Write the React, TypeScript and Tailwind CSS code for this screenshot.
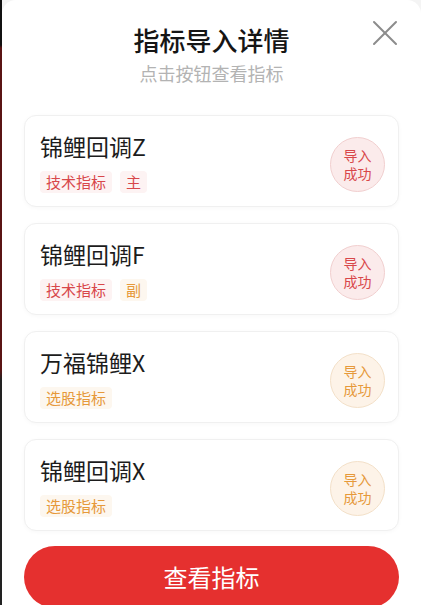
import { X } from 'lucide-react'

type Tag = { label: string; tone: 'red' | 'orange' }

interface Item {
  name: string
  tags: Tag[]
  tone: 'red' | 'orange'
}

const items: Item[] = [
  { name: '锦鲤回调Z', tags: [{ label: '技术指标', tone: 'red' }, { label: '主', tone: 'red' }], tone: 'red' },
  { name: '锦鲤回调F', tags: [{ label: '技术指标', tone: 'red' }, { label: '副', tone: 'orange' }], tone: 'red' },
  { name: '万福锦鲤X', tags: [{ label: '选股指标', tone: 'orange' }], tone: 'orange' },
  { name: '锦鲤回调X', tags: [{ label: '选股指标', tone: 'orange' }], tone: 'orange' },
]

const font = { fontFamily: '"Noto Sans CJK SC", "Noto Sans", sans-serif' }

function Chip({ label, tone }: Tag) {
  return (
    <span
      className={
        tone === 'red'
          ? 'h-[22px] px-[6px] flex items-center rounded-[4px] bg-[#fdf3f3] text-[#d8474a] text-[15px]'
          : 'h-[22px] px-[6px] flex items-center rounded-[4px] bg-[#fdf7ef] text-[#e6993a] text-[15px]'
      }
    >
      {label}
    </span>
  )
}

function ItemCard({ name, tags, tone }: Item) {
  return (
    <div className="h-[92px] rounded-[12px] border border-[#f0f0f0] bg-white shadow-[0_1px_4px_rgba(0,0,0,0.03)] flex items-center pl-[15px] pr-[13px]">
      <div className="flex-1 h-full flex flex-col pt-[16px]">
        <div className="text-[23px] leading-[28px] text-[#1c1c1c]">{name}</div>
        <div className="flex gap-[8px] mt-[11px]">
          {tags.map((t, i) => (
            <Chip key={i} {...t} />
          ))}
        </div>
      </div>
      <div
        className={
          tone === 'red'
            ? 'mt-[6px] w-[55px] h-[55px] rounded-full border border-[#f1cfcf] bg-[#fbebeb] text-[#d8474a] flex items-center justify-center text-center text-[14px] leading-[18px]'
            : 'mt-[6px] w-[55px] h-[55px] rounded-full border border-[#f3e0c8] bg-[#fdf3e8] text-[#e6993a] flex items-center justify-center text-center text-[14px] leading-[18px]'
        }
      >
        <span>
          导入
          <br />
          成功
        </span>
      </div>
    </div>
  )
}

export default function App() {
  return (
    <div className="w-[421px] h-[605px] overflow-hidden flex bg-[#f4f4f4]" style={font}>
      <div className="w-[2px] h-full bg-[linear-gradient(to_bottom,#111_0px,#111_45px,#5a1414_48px,#5a1414_370px,#222_380px,#222_100%)]" />
      <div className="relative flex-1 h-full bg-white rounded-t-[14px] flex flex-col pt-[23px]">
        <button className="absolute top-[11px] right-[14px] text-[#8c8c8c]">
          <X size={44} strokeWidth={1.1} />
        </button>
        <h1 className="text-center text-[26px] leading-[34px] font-medium text-[#151515]">指标导入详情</h1>
        <p className="text-center text-[18px] leading-[22px] mt-[5px] text-[#b3b3b3]">点击按钮查看指标</p>
        <div className="mt-[31px] mx-[22px] flex flex-col gap-[16px]">
          {items.map((it) => (
            <ItemCard key={it.name} {...it} />
          ))}
        </div>
        <button className="mt-[15px] mx-[22px] h-[62px] shrink-0 rounded-full bg-[#e5302f] text-white text-[24px] flex items-center justify-center">
          查看指标
        </button>
      </div>
    </div>
  )
}
